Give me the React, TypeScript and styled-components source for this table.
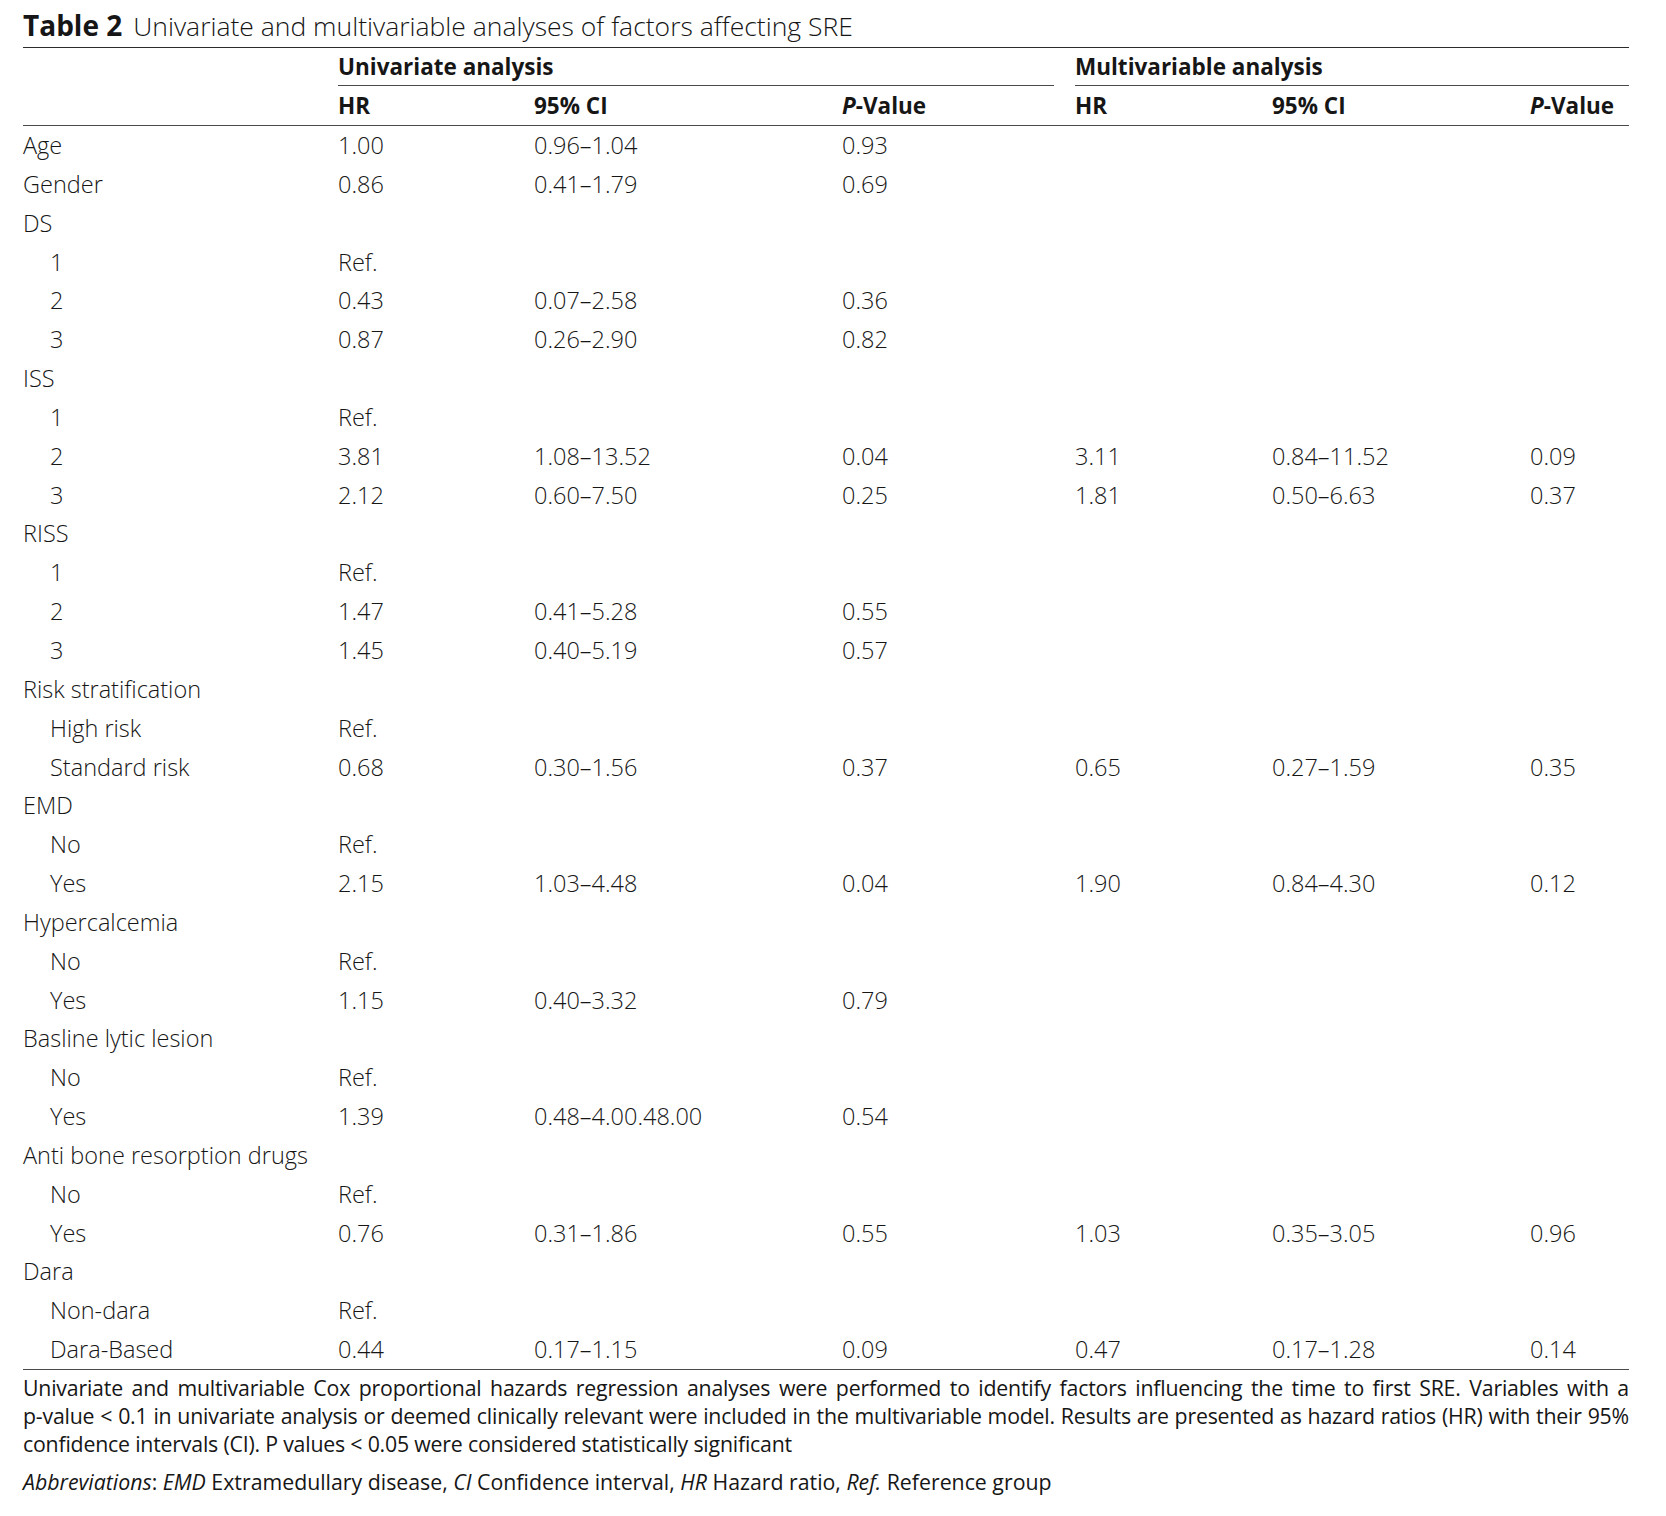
import React from 'react';
import styled, { createGlobalStyle } from 'styled-components';

const GlobalStyle = createGlobalStyle`
  html, body {
    margin: 0;
    padding: 0;
    background: #ffffff;
  }
  body {
    font-family: 'Open Sans', 'Liberation Sans', sans-serif;
    color: #161616;
  }
`;

// label | HR | 95% CI | P-Value | HR | 95% CI | P-Value
const COLS = '315px 196px 308px 233px 197px 258px 99px';

const Page = styled.div`
  width: 1606px;
  padding: 0 23px;
`;

const Caption = styled.div`
  padding: 10px 0 6px;
  line-height: 30px;
  font-size: 26.5px;
  font-weight: 300;
  border-bottom: 1px solid #2b2b2b;
  white-space: nowrap;
`;

const CaptionLabel = styled.span`
  font-size: 28px;
  font-weight: 700;
  margin-right: 11px;
`;

const Grid = styled.div`
  display: grid;
  grid-template-columns: ${COLS};
`;

const GroupLabel = styled.div<{ $gap?: number }>`
  grid-column: span 3;
  margin-right: ${(p) => p.$gap ?? 0}px;
  padding-top: 1px;
  line-height: 36px;
  font-size: 22.5px;
  font-weight: 700;
  border-bottom: 1px solid #4a4a4a;
`;

const HeadRow = styled(Grid)`
  padding-top: 1px;
  line-height: 38px;
  font-size: 22.5px;
  font-weight: 700;
  border-bottom: 1px solid #4a4a4a;
`;

const HeadCell = styled.div``;

const Italic = styled.i`
  font-style: italic;
`;

const Body = styled.div`
  border-bottom: 1px solid #4a4a4a;
`;

const Row = styled(Grid)`
  height: 38.85px;
  line-height: 39px;
  font-size: 23.5px;
  font-weight: 300;
`;

const Cell = styled.div<{ $indent?: boolean }>`
  padding-left: ${(p) => (p.$indent ? 27 : 0)}px;
  white-space: nowrap;
`;

const Notes = styled.div`
  padding-top: 4px;
  font-size: 21.3px;
  line-height: 28px;
  letter-spacing: -0.2px;
`;

const NoteLine = styled.div<{ $last?: boolean }>`
  text-align: justify;
  text-align-last: ${(p) => (p.$last ? 'left' : 'justify')};
  white-space: nowrap;
`;

const Abbrev = styled.div`
  margin-top: 10px;
  font-size: 21.3px;
  line-height: 28px;
`;

type RowData = { label: string; indent?: boolean; values?: string[] };

const rows: RowData[] = [
  { label: 'Age', values: ['1.00', '0.96–1.04', '0.93'] },
  { label: 'Gender', values: ['0.86', '0.41–1.79', '0.69'] },
  { label: 'DS' },
  { label: '1', indent: true, values: ['Ref.'] },
  { label: '2', indent: true, values: ['0.43', '0.07–2.58', '0.36'] },
  { label: '3', indent: true, values: ['0.87', '0.26–2.90', '0.82'] },
  { label: 'ISS' },
  { label: '1', indent: true, values: ['Ref.'] },
  { label: '2', indent: true, values: ['3.81', '1.08–13.52', '0.04', '3.11', '0.84–11.52', '0.09'] },
  { label: '3', indent: true, values: ['2.12', '0.60–7.50', '0.25', '1.81', '0.50–6.63', '0.37'] },
  { label: 'RISS' },
  { label: '1', indent: true, values: ['Ref.'] },
  { label: '2', indent: true, values: ['1.47', '0.41–5.28', '0.55'] },
  { label: '3', indent: true, values: ['1.45', '0.40–5.19', '0.57'] },
  { label: 'Risk stratification' },
  { label: 'High risk', indent: true, values: ['Ref.'] },
  { label: 'Standard risk', indent: true, values: ['0.68', '0.30–1.56', '0.37', '0.65', '0.27–1.59', '0.35'] },
  { label: 'EMD' },
  { label: 'No', indent: true, values: ['Ref.'] },
  { label: 'Yes', indent: true, values: ['2.15', '1.03–4.48', '0.04', '1.90', '0.84–4.30', '0.12'] },
  { label: 'Hypercalcemia' },
  { label: 'No', indent: true, values: ['Ref.'] },
  { label: 'Yes', indent: true, values: ['1.15', '0.40–3.32', '0.79'] },
  { label: 'Basline lytic lesion' },
  { label: 'No', indent: true, values: ['Ref.'] },
  { label: 'Yes', indent: true, values: ['1.39', '0.48–4.00.48.00', '0.54'] },
  { label: 'Anti bone resorption drugs' },
  { label: 'No', indent: true, values: ['Ref.'] },
  { label: 'Yes', indent: true, values: ['0.76', '0.31–1.86', '0.55', '1.03', '0.35–3.05', '0.96'] },
  { label: 'Dara' },
  { label: 'Non-dara', indent: true, values: ['Ref.'] },
  { label: 'Dara-Based', indent: true, values: ['0.44', '0.17–1.15', '0.09', '0.47', '0.17–1.28', '0.14'] },
];

const noteLines = [
  'Univariate and multivariable Cox proportional hazards regression analyses were performed to identify factors influencing the time to first SRE. Variables with a',
  'p-value < 0.1 in univariate analysis or deemed clinically relevant were included in the multivariable model. Results are presented as hazard ratios (HR) with their 95%',
  'confidence intervals (CI). P values < 0.05 were considered statistically significant',
];

const PValue: React.FC = () => (
  <HeadCell>
    <Italic>P</Italic>-Value
  </HeadCell>
);

const App: React.FC = () => {
  return (
    <Page>
      <GlobalStyle />
      <Caption>
        <CaptionLabel>Table 2</CaptionLabel>
        Univariate and multivariable analyses of factors affecting SRE
      </Caption>

      <Grid>
        <div />
        <GroupLabel $gap={21}>Univariate analysis</GroupLabel>
        <GroupLabel>Multivariable analysis</GroupLabel>
      </Grid>

      <HeadRow>
        <div />
        <HeadCell>HR</HeadCell>
        <HeadCell>95% CI</HeadCell>
        <PValue />
        <HeadCell>HR</HeadCell>
        <HeadCell>95% CI</HeadCell>
        <PValue />
      </HeadRow>

      <Body>
        {rows.map((r, i) => (
          <Row key={i}>
            <Cell $indent={r.indent}>{r.label}</Cell>
            {Array.from({ length: 6 }).map((_, j) => (
              <Cell key={j}>{r.values?.[j] ?? ''}</Cell>
            ))}
          </Row>
        ))}
      </Body>

      <Notes>
        {noteLines.map((line, i) => (
          <NoteLine key={i} $last={i === noteLines.length - 1}>
            {line}
          </NoteLine>
        ))}
      </Notes>

      <Abbrev>
        <Italic>Abbreviations</Italic>: <Italic>EMD</Italic> Extramedullary disease, <Italic>CI</Italic> Confidence
        interval, <Italic>HR</Italic> Hazard ratio, <Italic>Ref.</Italic> Reference group
      </Abbrev>
    </Page>
  );
};

export default App;
